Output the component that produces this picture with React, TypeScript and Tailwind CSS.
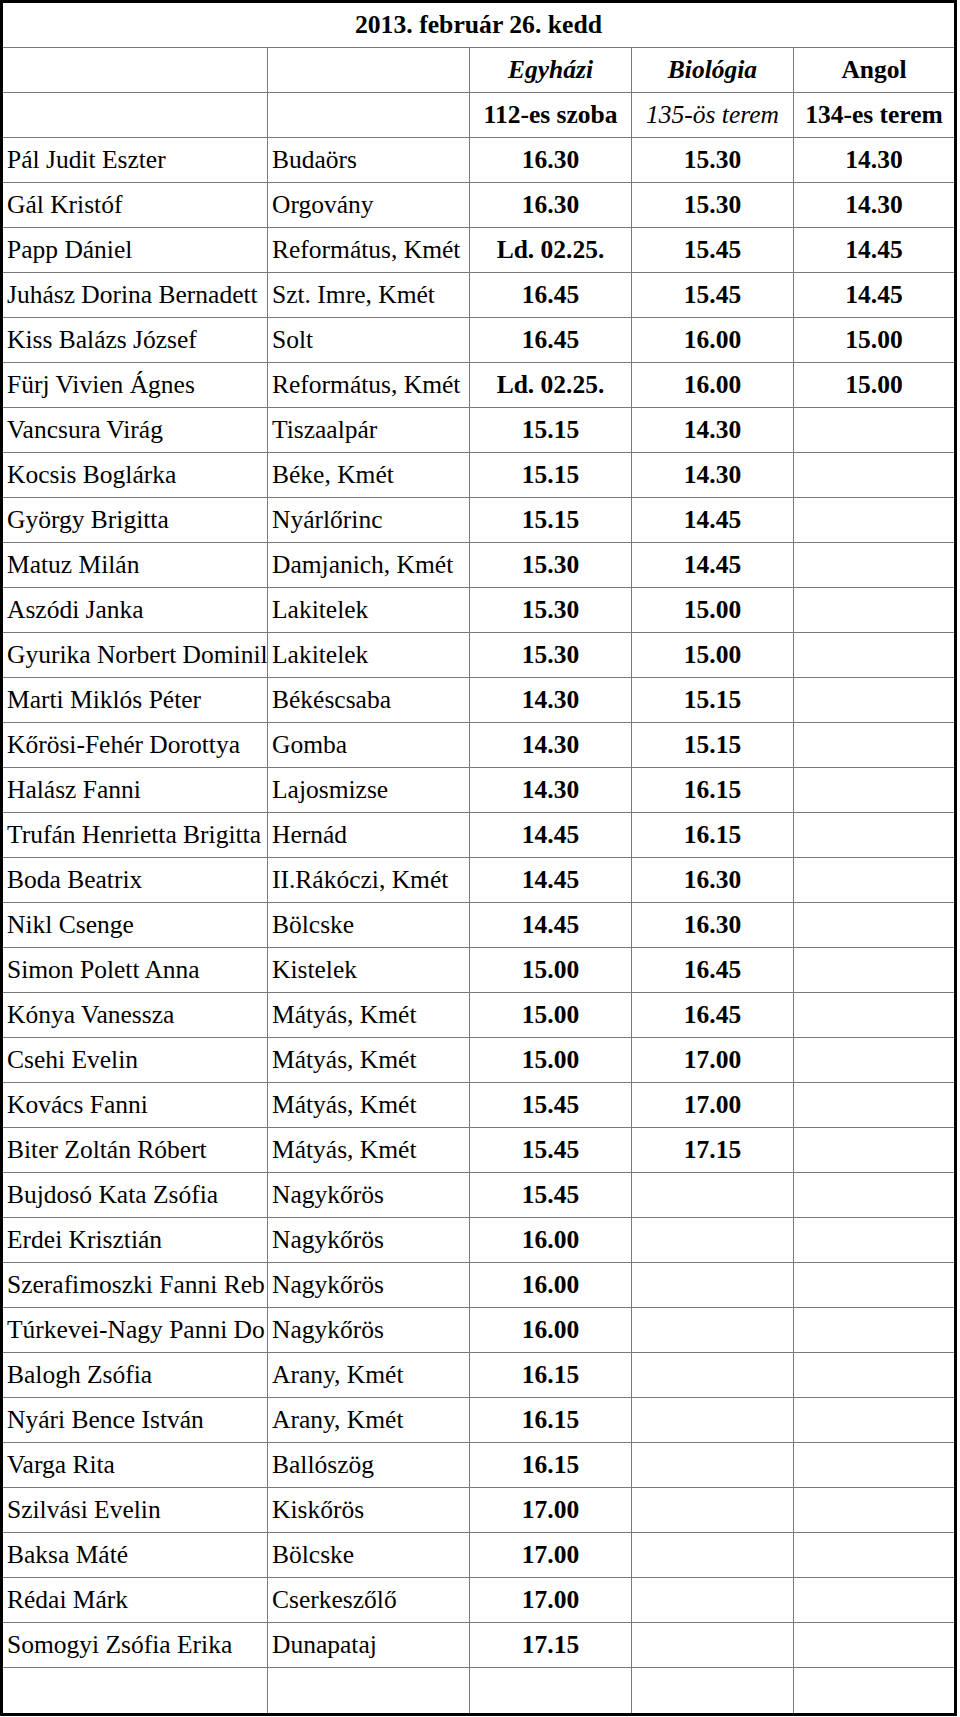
import React from "react";

type Row = [string, string, string, string, string];

const rows: Row[] = [
  ["Pál Judit Eszter", "Budaörs", "16.30", "15.30", "14.30"],
  ["Gál Kristóf", "Orgovány", "16.30", "15.30", "14.30"],
  ["Papp Dániel", "Református, Kmét", "Ld. 02.25.", "15.45", "14.45"],
  ["Juhász Dorina Bernadett", "Szt. Imre, Kmét", "16.45", "15.45", "14.45"],
  ["Kiss Balázs József", "Solt", "16.45", "16.00", "15.00"],
  ["Fürj Vivien Ágnes", "Református, Kmét", "Ld. 02.25.", "16.00", "15.00"],
  ["Vancsura Virág", "Tiszaalpár", "15.15", "14.30", ""],
  ["Kocsis Boglárka", "Béke, Kmét", "15.15", "14.30", ""],
  ["György Brigitta", "Nyárlőrinc", "15.15", "14.45", ""],
  ["Matuz Milán", "Damjanich, Kmét", "15.30", "14.45", ""],
  ["Aszódi Janka", "Lakitelek", "15.30", "15.00", ""],
  ["Gyurika Norbert Dominil", "Lakitelek", "15.30", "15.00", ""],
  ["Marti Miklós Péter", "Békéscsaba", "14.30", "15.15", ""],
  ["Kőrösi-Fehér Dorottya", "Gomba", "14.30", "15.15", ""],
  ["Halász Fanni", "Lajosmizse", "14.30", "16.15", ""],
  ["Trufán Henrietta Brigitta", "Hernád", "14.45", "16.15", ""],
  ["Boda Beatrix", "II.Rákóczi, Kmét", "14.45", "16.30", ""],
  ["Nikl Csenge", "Bölcske", "14.45", "16.30", ""],
  ["Simon Polett Anna", "Kistelek", "15.00", "16.45", ""],
  ["Kónya Vanessza", "Mátyás, Kmét", "15.00", "16.45", ""],
  ["Csehi Evelin", "Mátyás, Kmét", "15.00", "17.00", ""],
  ["Kovács Fanni", "Mátyás, Kmét", "15.45", "17.00", ""],
  ["Biter Zoltán Róbert", "Mátyás, Kmét", "15.45", "17.15", ""],
  ["Bujdosó Kata Zsófia", "Nagykőrös", "15.45", "", ""],
  ["Erdei Krisztián", "Nagykőrös", "16.00", "", ""],
  ["Szerafimoszki Fanni Reb", "Nagykőrös", "16.00", "", ""],
  ["Túrkevei-Nagy Panni Do", "Nagykőrös", "16.00", "", ""],
  ["Balogh Zsófia", "Arany, Kmét", "16.15", "", ""],
  ["Nyári Bence István", "Arany, Kmét", "16.15", "", ""],
  ["Varga Rita", "Ballószög", "16.15", "", ""],
  ["Szilvási Evelin", "Kiskőrös", "17.00", "", ""],
  ["Baksa Máté", "Bölcske", "17.00", "", ""],
  ["Rédai Márk", "Cserkeszőlő", "17.00", "", ""],
  ["Somogyi Zsófia Erika", "Dunapataj", "17.15", "", ""],
  ["", "", "", "", ""],
];

const rowCls =
  "grid grid-cols-[265px_202px_162px_162px_160px] h-[45px] border-b border-[#7a7a7a] last:border-b-0";
const cellL =
  "flex items-center pl-1 overflow-hidden whitespace-nowrap border-r border-[#7a7a7a] leading-[44px]";
const cellC =
  "flex items-center justify-center overflow-hidden whitespace-nowrap border-r border-[#7a7a7a] leading-[44px]";
const cellLast =
  "flex items-center justify-center overflow-hidden whitespace-nowrap leading-[44px]";

export default function App() {
  return (
    <div className="w-[960px] min-h-[1717px] bg-white">
      <div
        className="w-[957px] border-[3px] border-black text-black text-[25.5px]"
        style={{ fontFamily: '"Liberation Serif", "Times New Roman", serif' }}
      >
        <div className="h-[45px] flex items-center justify-center border-b border-[#7a7a7a] font-bold text-[25.7px] leading-[44px]">
          2013. február 26. kedd
        </div>
        <div className={rowCls}>
          <div className={cellL}></div>
          <div className={cellL}></div>
          <div className={cellC + " font-bold italic"}>Egyházi</div>
          <div className={cellC + " font-bold italic"}>Biológia</div>
          <div className={cellLast + " font-bold"}>Angol</div>
        </div>
        <div className={rowCls}>
          <div className={cellL}></div>
          <div className={cellL}></div>
          <div className={cellC + " font-bold"}>112-es szoba</div>
          <div className={cellC + " italic"}>135-ös terem</div>
          <div className={cellLast + " font-bold"}>134-es terem</div>
        </div>
        {rows.map((r, i) => (
          <div key={i} className={rowCls}>
            <div className={cellL}>{r[0]}</div>
            <div className={cellL}>{r[1]}</div>
            <div className={cellC + " font-bold"}>{r[2]}</div>
            <div className={cellC + " font-bold"}>{r[3]}</div>
            <div className={cellLast + " font-bold"}>{r[4]}</div>
          </div>
        ))}
      </div>
    </div>
  );
}
